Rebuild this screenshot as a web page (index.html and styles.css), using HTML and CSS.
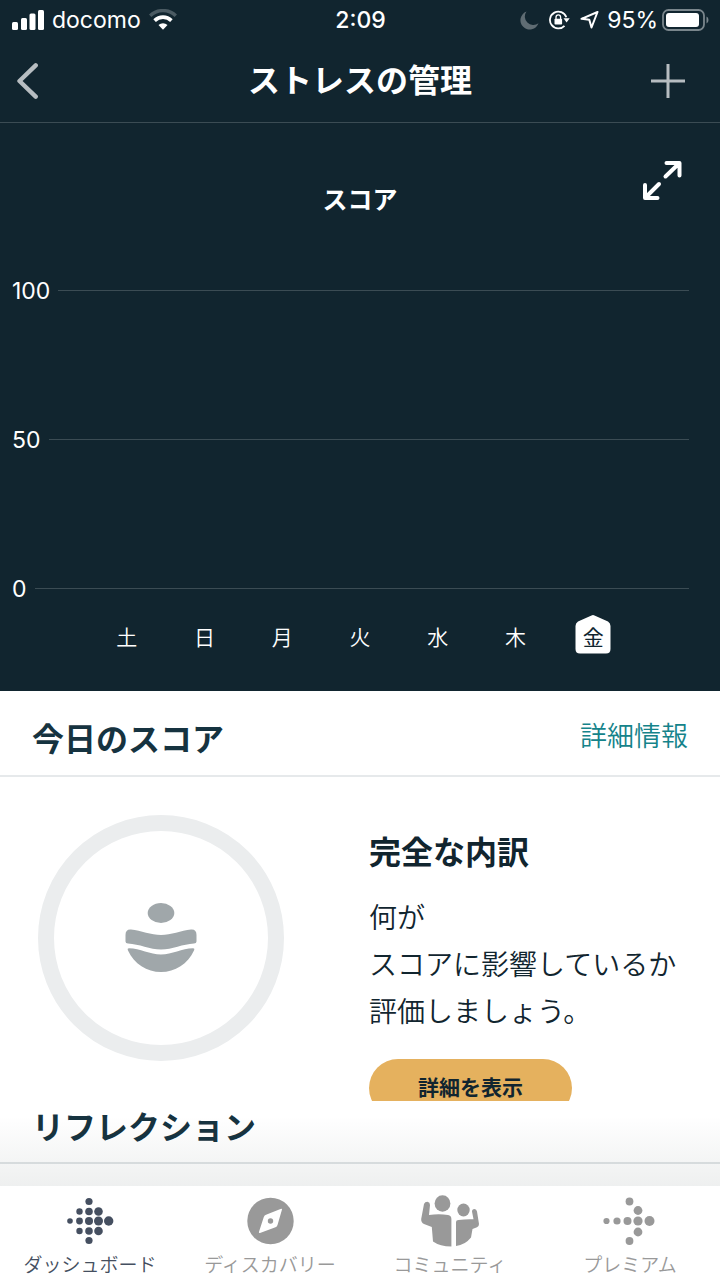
FILE: index.html
```html
<!DOCTYPE html>
<html lang="ja">
<head>
<meta charset="utf-8">
<meta name="viewport" content="width=device-width, initial-scale=1">
<title>ストレスの管理</title>
<link rel="stylesheet" href="styles.css">
</head>
<body>
<div class="app">
  <div class="dark">
    <div class="status">
      <div class="status-left">
        <svg width="32" height="20" viewBox="0 0 32 20" fill="#fff" aria-hidden="true">
          <rect x="0" y="12" width="6" height="8" rx="1.5"/><rect x="9" y="8" width="6" height="12" rx="1.5"/><rect x="17.500" y="3.500" width="6" height="16.500" rx="1.500"/><rect x="26" y="0" width="6" height="20" rx="1.500"/>
        </svg>
        <span class="carrier">docomo</span>
        <svg width="28" height="22" viewBox="0 0 28 22" fill="none" aria-hidden="true">
          <path d="M1.200 6.700A18.500 18.500 0 0 1 26.800 6.700" stroke="#4b5b63" stroke-width="3.400"/>
          <path d="M5.600 11.600A12 12 0 0 1 22.400 11.600" stroke="#fff" stroke-width="3.600"/>
          <path d="M9.500 16A7 7 0 0 1 18.500 16L14 20.800Z" fill="#fff"/>
        </svg>
      </div>
      <span class="clock">2:09</span>
      <div class="status-right">
        <svg width="19" height="19" viewBox="0 0 19 19" aria-hidden="true"><path d="M6.500.5A9.300 9.300 0 1 0 18.500 12.300A8.500 8.500 0 0 1 6.500.5Z" fill="#5f6c73"/></svg>
        <svg class="lock" width="21" height="20" viewBox="0 0 21 20" fill="none" aria-hidden="true">
          <path d="M17.300 7.200A8.400 8.400 0 1 0 15.500 15.800" stroke="#fff" stroke-width="1.800"/>
          <path d="M14.500 8.300H20.700L17.600 12.600Z" fill="#fff"/>
          <rect x="5.500" y="8.800" width="7.600" height="5.800" rx=".8" fill="#fff"/>
          <path d="M7 9V7.200a2.300 2.300 0 0 1 4.600 0V9" stroke="#fff" stroke-width="1.300"/>
        </svg>
        <svg class="nav-arrow" width="19" height="18" viewBox="0 0 19 18" fill="none" stroke="#fff" stroke-width="2" stroke-linejoin="round" aria-hidden="true"><path d="M17.500 1L1.500 7.800L9.300 8.800L11.500 16.500Z"/></svg>
        <span class="percent">95%</span>
        <svg width="47" height="22" viewBox="0 0 47 22" fill="none" aria-hidden="true">
          <rect x="1" y="1" width="41" height="20" rx="5.500" stroke="#7a868c" stroke-width="1.800"/>
          <rect x="4" y="4" width="33" height="14" rx="3" fill="#fff"/>
          <path d="M44.500 7.500Q46.500 8.300 46.500 11T44.500 14.500Z" fill="#7a868c"/>
        </svg>
      </div>
    </div>
    <header class="navbar">
      <button class="icon-btn" type="button" aria-label="戻る">
        <svg width="22" height="36" viewBox="0 0 22 36" fill="none" stroke="#b7bdc1" stroke-width="4.400" stroke-linecap="round" stroke-linejoin="round"><path d="M18.700 2.400L2.500 18L18.700 33.600"/></svg>
      </button>
      <h1 class="title">ストレスの管理</h1>
      <button class="icon-btn icon-btn-end" type="button" aria-label="追加">
        <svg width="34" height="34" viewBox="0 0 34 34" fill="none" stroke="#b7bdc1" stroke-width="3"><path d="M17 0V34M0 17H34"/></svg>
      </button>
    </header>
    <section class="chart">
      <div class="chart-head">
        <h2 class="chart-title">スコア</h2>
        <button class="expand" type="button" aria-label="拡大">
          <svg width="42" height="42" viewBox="0 0 42 42" fill="none" stroke="#fff" stroke-width="4" stroke-linecap="round" stroke-linejoin="round"><path d="M25.500 4H38.500V16.500M38 4.500L24.500 17.500M4 26V39H16.500M4.500 38.500L18 25"/></svg>
        </button>
      </div>
      <div class="grid-row"><span>100</span><i class="line"></i></div>
      <div class="grid-row"><span>50</span><i class="line"></i></div>
      <div class="grid-row"><span>0</span><i class="line"></i></div>
      <div class="days">
        <span>土</span><span>日</span><span>月</span><span>火</span><span>水</span><span>木</span>
        <span class="today"><svg class="tag" width="36" height="40" viewBox="0 0 36 40" aria-hidden="true"><path d="M16.500 1.500Q18 .7 19.500 1.500L33 7.500Q35.500 9 35.500 12V35Q35.500 39.500 31 39.500H5Q.5 39.500 .5 35V12Q.5 9 3 7.500Z" fill="#fff"/></svg><b class="today-text">金</b></span>
      </div>
    </section>
  </div>

  <main class="content">
    <div class="section-head">
      <h2 class="heading">今日のスコア</h2>
      <a class="more" href="#details">詳細情報</a>
    </div>
    <div class="score" id="details">
      <div class="score-left">
        <div class="ring">
          <svg width="72" height="70" viewBox="0 0 72 70" fill="#a0a7aa" aria-hidden="true">
            <ellipse cx="36" cy="10" rx="13.300" ry="10"/>
            <path d="M.5 32Q.5 26 6 26.500C16 27.500 26 32 36 32S56 27.500 66 26.500Q71.500 26 71.500 32V38.500Q71.500 40.500 69 40.500C58 41 47 46.500 36 46.500S14 41 3 40.500Q.5 40.500 .5 38.500Z"/>
            <path d="M4 45.300C15 45.500 25 51.500 36 51.500S57 45.500 68 45.300Q70 45.300 69 47.500C63 61 50 69 36 69S9 61 3 47.500Q2 45.300 4 45.300Z"/>
          </svg>
        </div>
        <h3 class="heading">リフレクション</h3>
      </div>
      <div class="score-right">
        <h3 class="heading heading-dark">完全な内訳</h3>
        <p class="desc">何が<br>スコアに影響しているか<br>評価しましょう。</p>
        <div class="clip"><button class="cta" type="button">詳細を表示</button></div>
      </div>
    </div>
    <div class="fade"></div>
  </main>

  <nav class="tabs">
    <a class="tab tab-active" href="#dashboard">
      <svg width="48" height="48" viewBox="0 0 48 48" fill="currentColor" aria-hidden="true">
        <circle cx="23" cy="4.500" r="3.600"/><circle cx="23" cy="43.500" r="3.600"/>
        <circle cx="13.500" cy="14.500" r="3.200"/><circle cx="23" cy="14.500" r="3.800"/><circle cx="32.500" cy="14.500" r="4.300"/>
        <circle cx="4" cy="24" r="2.800"/><circle cx="13.500" cy="24" r="3.400"/><circle cx="23" cy="24" r="4"/><circle cx="32.500" cy="24" r="4.500"/><circle cx="42.700" cy="24" r="4.700"/>
        <circle cx="13.500" cy="34" r="3.200"/><circle cx="23" cy="34" r="3.800"/><circle cx="32.500" cy="34" r="4.300"/>
      </svg>
      <span>ダッシュボード</span>
    </a>
    <a class="tab" href="#discover">
      <svg width="48" height="48" viewBox="0 0 48 48" aria-hidden="true">
        <circle cx="24.500" cy="24" r="23.200" fill="currentColor"/>
        <path d="M36 12.500L31.500 28Q31 29.700 29.500 30.300L14 36Q12.500 36.300 13 34.800L17.800 20Q18.500 18.300 20 17.700L34.500 12Q36.300 11.500 36 12.500Z" fill="#fff"/>
        <circle cx="24.500" cy="24" r="2.700" fill="currentColor"/>
      </svg>
      <span>ディスカバリー</span>
    </a>
    <a class="tab" href="#community">
      <svg width="60" height="52" viewBox="0 0 60 52" fill="currentColor" aria-hidden="true">
        <ellipse cx="22.500" cy="8.500" rx="7.900" ry="8.200"/>
        <ellipse cx="43.500" cy="15" rx="6.200" ry="6.500"/>
        <path d="M4 9Q5 6.700 7.500 6.800Q10 7.300 10 10L9 20Q19 18.700 28 20Q31.400 20.500 31.400 24V51.500Q20 51.500 13 46.500L11.800 32L4 29Q1 27.500 1.200 24Z"/>
        <path d="M36 27Q36 25 38.500 25Q46 24 53.500 24.300L52 16.500Q52 14 54.500 14Q56.500 14 57 16.500L59 29Q59 31.500 57 32.300L52.500 34L51 42.500Q45 50 36 51Z"/>
      </svg>
      <span>コミュニティ</span>
    </a>
    <a class="tab" href="#premium">
      <svg width="54" height="48" viewBox="0 0 54 48" fill="currentColor" aria-hidden="true">
        <circle cx="3.500" cy="24" r="3.100"/><circle cx="14" cy="24" r="3.600"/><circle cx="24.500" cy="24" r="4"/><circle cx="35" cy="24" r="4.600"/><circle cx="46.500" cy="24" r="5"/>
        <circle cx="26.500" cy="4.500" r="3.900"/><circle cx="35" cy="13.500" r="4.400"/><circle cx="35" cy="35" r="4.400"/><circle cx="26.500" cy="44" r="3.900"/>
      </svg>
      <span>プレミアム</span>
    </a>
  </nav>
</div>
</body>
</html>
```
FILE: styles.css
```css
* { box-sizing: border-box; }
body, h1, h2, h3, p { margin: 0; }
body {
  font-family: Inter, "Noto Sans CJK JP", sans-serif;
  background: #fff;
  color: #11252f;
}
button {
  border: 0;
  padding: 0;
  background: none;
  font: inherit;
  color: inherit;
  cursor: pointer;
}
a { text-decoration: none; }
svg { display: block; flex: none; }

.app { min-height: 100vh; display: flex; flex-direction: column; }
.dark { background: #11252f; color: #fff; }

.status {
  display: grid;
  grid-template-columns: 1fr auto 1fr;
  align-items: center;
  height: 40px;
  padding: 0 11px 0 12px;
  font-size: 23px;
  line-height: 28px;
}
.status-left, .status-right { display: flex; align-items: center; gap: 8px; }
.status-right { justify-content: flex-end; }
.clock { font-weight: 500; }
.lock { margin-left: 2px; }
.nav-arrow { margin-left: 2px; }
.percent { margin-right: -4px; }

.navbar {
  display: grid;
  grid-template-columns: 1fr auto 1fr;
  align-items: center;
  height: 83px;
  padding: 0 17px;
  border-bottom: 1px solid #3b4c54;
}
.title { font-size: 32px; line-height: 48px; font-weight: 700; }
.icon-btn { justify-self: start; }
.icon-btn-end { justify-self: end; margin-right: 18px; }

.chart { padding: 36px 31px 36px 12px; }
.chart-head {
  display: grid;
  grid-template-columns: 1fr auto 1fr;
  height: 94px;
  margin-left: 19px;
}
.chart-title { grid-column: 2; margin-top: 23px; font-size: 25px; line-height: 36px; font-weight: 700; }
.expand { justify-self: end; align-self: start; margin-right: 6px; }
.grid-row {
  display: flex;
  align-items: center;
  gap: 8px;
  height: 28px;
  margin-top: 121px;
  font-size: 23px;
  line-height: 28px;
}
.grid-row span { padding-top: 2px; }
.chart-head + .grid-row { margin-top: 23px; }
.line { flex: 1; height: 1px; background: #3b4c54; }
.days {
  display: flex;
  height: 40px;
  margin: 12px 57px 1px 76px;
  font-size: 21px;
  line-height: 40px;
  font-weight: 350;
}
.days span { flex: 1; padding-top: 4px; text-align: center; }
.days .today { display: grid; justify-items: center; padding-top: 0; color: #11252f; }
.tag, .today-text { grid-area: 1 / 1; }
.today-text { font-weight: 400; padding-top: 4px; }

.content { position: relative; flex: 1; }
.section-head {
  display: flex;
  justify-content: space-between;
  align-items: center;
  height: 86px;
  padding: 14px 32px 0;
  border-bottom: 2px solid #e6e9eb;
}
.heading { font-size: 32px; line-height: 48px; font-weight: 700; color: #163340; }
.heading-dark { color: #11252f; }
.more { font-size: 27px; line-height: 40px; margin-bottom: 6px; font-weight: 350; color: #15838a; }
.score {
  display: grid;
  grid-template-columns: 337fr 319fr;
  padding: 38px 32px 10px;
  border-bottom: 2px solid #e0e4e6;
}
.ring {
  display: grid;
  place-items: center;
  width: 246px;
  height: 246px;
  margin: 0 0 43px 6px;
  border: 16px solid #ebedee;
  border-radius: 50%;
}
.score-right { padding-top: 14px; }
.desc { margin-top: 18px; font-size: 28px; line-height: 47px; font-weight: 350; white-space: nowrap; }
.clip { height: 42px; margin-top: 23px; overflow: hidden; }
.cta {
  width: 203px;
  height: 58px;
  border-radius: 29px;
  background: #e5b15e;
  font-size: 21px;
  line-height: 30px;
  font-weight: 700;
}
.fade {
  position: absolute;
  inset: auto 0 0;
  height: 70px;
  background: linear-gradient(rgba(17, 37, 35, 0), rgba(17, 37, 35, 0.07));
  pointer-events: none;
}

.tabs {
  display: grid;
  grid-template-columns: repeat(4, 1fr);
  height: 94px;
  background: #fff;
}
.tab {
  display: grid;
  grid-template-rows: 52px 33px;
  align-items: center;
  justify-items: center;
  padding-top: 9px;
  font-size: 19px;
  line-height: 28px;
  font-weight: 350;
  color: #999;
}
.tab span { padding-top: 5px; }
.tab-active { color: #454f60; }
```
